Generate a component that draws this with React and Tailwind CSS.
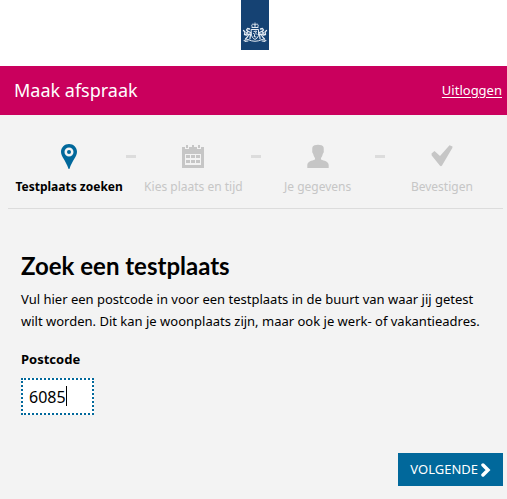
import { useState } from 'react';

const STEPS = [
  { label: 'Testplaats zoeken', Icon: PinIcon },
  { label: 'Kies plaats en tijd', Icon: CalendarIcon },
  { label: 'Je gegevens', Icon: PersonIcon },
  { label: 'Bevestigen', Icon: CheckIcon },
];

function PinIcon() {
  return (
    <svg width="24" height="26" viewBox="0 0 24 26" fill="currentColor" aria-hidden="true">
      <path
        fillRule="evenodd"
        d="M12 1C7.500 1 4 4.400 4 8.800C4 13.500 8.500 17 11.600 26H12.400C15.500 17 20 13.500 20 8.800C20 4.400 16.500 1 12 1ZM12 4.500A4.500 4.500 0 1 1 12 13.500A4.500 4.500 0 1 1 12 4.500Z"
      />
      <circle cx="12" cy="9" r="2" />
    </svg>
  );
}

function CalendarIcon() {
  return (
    <svg width="24" height="26" viewBox="0 0 24 26" fill="currentColor" aria-hidden="true">
      <path d="M1 4H4V6H8V4H16V6H20V4H23V10H1Z" />
      <path d="M5 2H7V5H5ZM17 2H19V5H17ZM11 2H13V5H11Z" />
      <path
        fillRule="evenodd"
        d="M1 9H23V25H1ZM4 11V22H20V11Z"
      />
      <path d="M5 12H9V15H5ZM10 12H14V15H10ZM15 12H19V15H15ZM5 17H9V20H5ZM10 17H14V20H10ZM15 17H19V20H15Z" />
    </svg>
  );
}

function PersonIcon() {
  return (
    <svg width="24" height="26" viewBox="0 0 24 26" fill="currentColor" aria-hidden="true">
      <path d="M6.500 4C7.500 1 16.500 1 17.500 4C18 6 17.600 7 17.800 8.500C17.800 10 17 10.300 16.800 11C16.300 13.500 15.300 14.500 15 15V16.500C18 18 22.500 18 22.700 22V25H1.300V22C1.500 18 6 18 9 16.500V15C8.700 14.500 7.700 13.500 7.200 11C7 10.300 6.200 10 6.200 8.500C6.400 7 6 6 6.500 4Z" />
    </svg>
  );
}

function CheckIcon() {
  return (
    <svg width="24" height="26" viewBox="0 0 24 26" fill="currentColor" aria-hidden="true">
      <path d="M1.500 10.500L4.500 8L10 13L19.500 2.300L22.500 3.500L22.300 5L12 22.500Q11 24 9.800 22.500L1.700 12.500Z" />
    </svg>
  );
}

function CoatOfArms() {
  return (
    <svg width="28" height="50" viewBox="0 0 28 50" role="img" aria-label="Rijksoverheid">
      <path fill="#154273" d="M0 0H28V50H0Z" />
      <g fill="none" stroke="#e4ebf3" strokeWidth="1" strokeLinecap="round" strokeLinejoin="round">
        <path d="M11 26.500C10 24 12 23.500 14 25C16 23.500 18 24 17 26.500M11 27.500H17M14 23V26.500" />
        <path d="M10.500 29.500H17.500V35.500Q17 38 14 39.500Q11 38 10.500 35.500Z" />
        <path d="M13 31.500L15.500 31L14.500 33L16 34.500M12.500 33.500L14 34.500L13 36.500L15 37" />
        <path strokeWidth="1.300" d="M8.500 29L6.500 28.500L5.500 30L7 31.500L5.500 33L7.500 35L6 37.500L4.500 39M7.500 31.500L9.500 32.500M7.500 34.500L9.500 34L9 38.500M5.500 35L3.500 34.500L4 32L2.500 30.500" />
        <path strokeWidth="1.300" d="M19.500 29L21.500 28.500L22.500 30L21 31.500L22.500 33L20.500 35L22 37.500L23.500 39M20.500 31.500L18.500 32.500M20.500 34.500L18.500 34L19 38.500M22.500 35L24.500 34.500L24 32L25.500 30.500" />
        <path d="M3 40.500L7 39.500Q14 43 21 39.500L25 40.500M4 41.500L7 41M24 41.500L21 41" />
      </g>
    </svg>
  );
}

function Steps({ current }) {
  return (
    <ol className="flex pr-1 pb-[11px] pl-1">
      {STEPS.map(({ label, Icon }, i) => (
        <li
          key={label}
          aria-current={i === current ? 'step' : undefined}
          className={i === STEPS.length - 1 ? 'flex min-w-0 flex-[114]' : 'flex min-w-0 flex-[124]'}
        >
          <div
            className={
              i === current
                ? 'flex min-w-0 flex-1 flex-col items-center gap-2 font-bold text-black'
                : 'flex min-w-0 flex-1 flex-col items-center gap-2 text-[#c6c6c6]'
            }
          >
            <span className={i === current ? 'text-[#01689b]' : ''}>
              <Icon />
            </span>
            <span className="text-[12px] leading-5 whitespace-nowrap">{label}</span>
          </div>
          {i < STEPS.length - 1 && <span className="mt-3 h-[3px] w-2.5 shrink-0 bg-[#dcdcdc]" />}
        </li>
      ))}
    </ol>
  );
}

export default function App() {
  const [postcode, setPostcode] = useState('6085');

  return (
    <div className="flex min-h-screen flex-col bg-[#f3f3f3] font-['Noto_Sans','Open_Sans',sans-serif] text-black">
      <header>
        <div className="flex justify-center bg-white pr-0.5 pb-4 pl-1">
          <CoatOfArms />
        </div>
        <div className="flex h-[49px] items-center justify-between bg-[#ca005d] pr-[5px] pl-[14px] text-white">
          <span className="text-[18px]">Maak afspraak</span>
          <a href="#uitloggen" className="text-[13px] underline underline-offset-2">Uitloggen</a>
        </div>
      </header>

      <main className="pt-7 pr-1 pl-2">
        <nav aria-label="Stappen" className="border-b border-[#dcdcdc]">
          <Steps current={0} />
        </nav>

        <form onSubmit={(e) => e.preventDefault()}>
          <div className="px-[13px] pt-[39px]">
            <h1 className="font-['Lato','Noto_Sans',sans-serif] text-[24px] leading-9 font-bold">Zoek een testplaats</h1>
            <p className="mt-1 text-[13px] leading-[22px]">
              Vul hier een postcode in voor een testplaats in de buurt van waar jij getest wilt worden. Dit kan je
              woonplaats zijn, maar ook je werk- of vakantieadres.
            </p>
            <label htmlFor="postcode" className="mt-4 block text-[13px] leading-[22px] font-bold">
              Postcode
            </label>
            <div className="relative mt-2 w-[73px]">
              <input
                id="postcode"
                type="text"
                value={postcode}
                onChange={(e) => setPostcode(e.target.value)}
                className="block h-[37px] w-full border-2 border-dotted border-[#01689b] bg-white px-1.5 text-[16px] caret-transparent outline-none"
              />
              <span className="pointer-events-none absolute top-2 left-[45px] h-5 w-px bg-black" />
            </div>
          </div>
          <div className="mt-[38px] flex justify-end">
            <button
              type="submit"
              className="flex h-[33px] items-center gap-0.5 bg-[#01689b] px-3 text-[13px] text-white"
            >
              VOLGENDE
              <svg width="11" height="14" viewBox="0 0 11 14" aria-hidden="true">
                <path
                  d="M3 2L8 7L3 12"
                  fill="none"
                  stroke="currentColor"
                  strokeWidth="3.500"
                  strokeLinecap="round"
                />
              </svg>
            </button>
          </div>
        </form>
      </main>
    </div>
  );
}
